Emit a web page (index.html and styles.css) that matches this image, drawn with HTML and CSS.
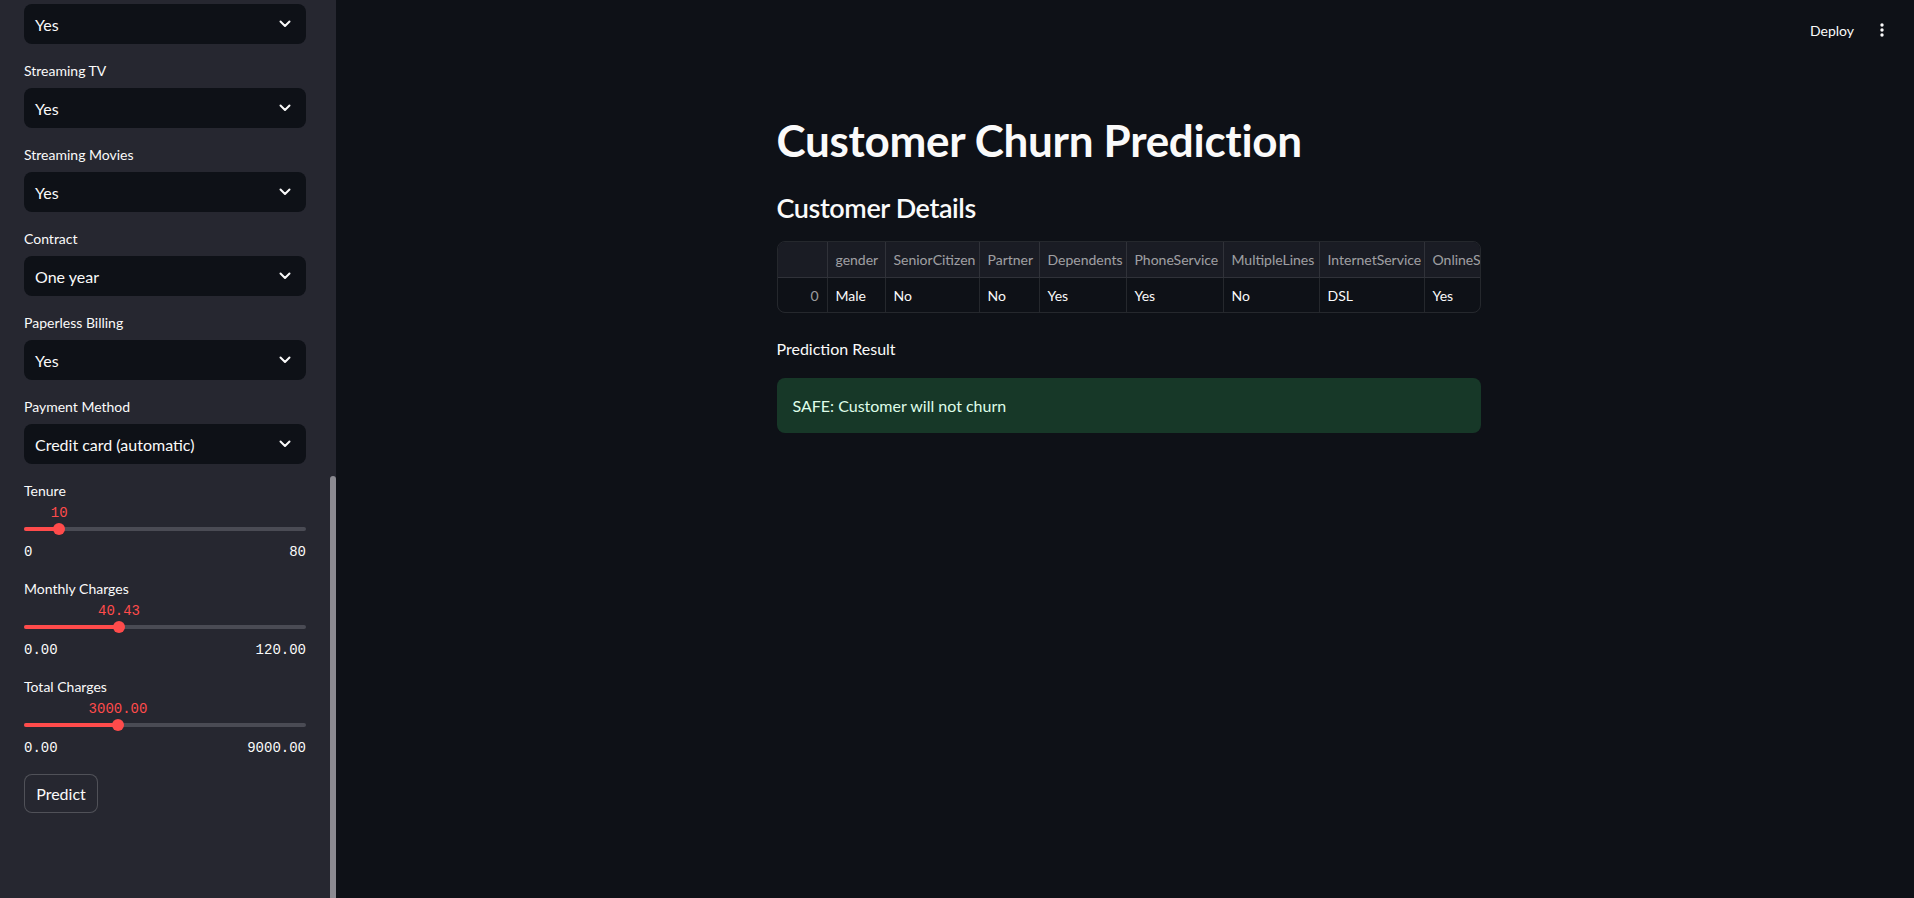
FILE: index.html
```html
<!DOCTYPE html>
<html lang="en">
<head>
<meta charset="utf-8">
<title>Customer Churn Prediction</title>
<link rel="stylesheet" href="styles.css">
</head>
<body>
<div class="app">
  <aside class="sidebar">
    <div class="side-content">
      <div class="select"><span>Yes</span><svg class="chev" viewBox="0 0 12 8" width="12" height="8"><path d="M1.5 1.5 L6 6 L10.5 1.5" fill="none" stroke="#fafafa" stroke-width="2" stroke-linecap="round" stroke-linejoin="round"/></svg></div>

      <div class="field">
        <div class="label">Streaming TV</div>
        <div class="select"><span>Yes</span><svg class="chev" viewBox="0 0 12 8" width="12" height="8"><path d="M1.5 1.5 L6 6 L10.5 1.5" fill="none" stroke="#fafafa" stroke-width="2" stroke-linecap="round" stroke-linejoin="round"/></svg></div>
      </div>

      <div class="field">
        <div class="label">Streaming Movies</div>
        <div class="select"><span>Yes</span><svg class="chev" viewBox="0 0 12 8" width="12" height="8"><path d="M1.5 1.5 L6 6 L10.5 1.5" fill="none" stroke="#fafafa" stroke-width="2" stroke-linecap="round" stroke-linejoin="round"/></svg></div>
      </div>

      <div class="field">
        <div class="label">Contract</div>
        <div class="select"><span>One year</span><svg class="chev" viewBox="0 0 12 8" width="12" height="8"><path d="M1.5 1.5 L6 6 L10.5 1.5" fill="none" stroke="#fafafa" stroke-width="2" stroke-linecap="round" stroke-linejoin="round"/></svg></div>
      </div>

      <div class="field">
        <div class="label">Paperless Billing</div>
        <div class="select"><span>Yes</span><svg class="chev" viewBox="0 0 12 8" width="12" height="8"><path d="M1.5 1.5 L6 6 L10.5 1.5" fill="none" stroke="#fafafa" stroke-width="2" stroke-linecap="round" stroke-linejoin="round"/></svg></div>
      </div>

      <div class="field">
        <div class="label">Payment Method</div>
        <div class="select"><span>Credit card (automatic)</span><svg class="chev" viewBox="0 0 12 8" width="12" height="8"><path d="M1.5 1.5 L6 6 L10.5 1.5" fill="none" stroke="#fafafa" stroke-width="2" stroke-linecap="round" stroke-linejoin="round"/></svg></div>
      </div>

      <div class="field">
        <div class="label">Tenure</div>
        <div class="slider">
          <div class="track">
            <div class="fill" style="width:12.5%"></div>
            <div class="thumb" style="left:12.5%"></div>
            <div class="thumb-value" style="left:12.5%">10</div>
          </div>
          <div class="ticks"><span>0</span><span>80</span></div>
        </div>
      </div>

      <div class="field">
        <div class="label">Monthly Charges</div>
        <div class="slider">
          <div class="track">
            <div class="fill" style="width:33.69%"></div>
            <div class="thumb" style="left:33.69%"></div>
            <div class="thumb-value" style="left:33.69%">40.43</div>
          </div>
          <div class="ticks"><span>0.00</span><span>120.00</span></div>
        </div>
      </div>

      <div class="field">
        <div class="label">Total Charges</div>
        <div class="slider">
          <div class="track">
            <div class="fill" style="width:33.33%"></div>
            <div class="thumb" style="left:33.33%"></div>
            <div class="thumb-value" style="left:33.33%">3000.00</div>
          </div>
          <div class="ticks"><span>0.00</span><span>9000.00</span></div>
        </div>
      </div>

      <div class="field">
        <button class="btn">Predict</button>
      </div>
    </div>
    <div class="scrollbar"></div>
  </aside>

  <main class="main">
    <header class="topbar">
      <span class="deploy">Deploy</span>
      <svg class="kebab" viewBox="0 0 16 16" width="16" height="16"><circle cx="8" cy="3" r="1.7" fill="#fafafa"/><circle cx="8" cy="8" r="1.7" fill="#fafafa"/><circle cx="8" cy="13" r="1.7" fill="#fafafa"/></svg>
    </header>
    <div class="block">
      <h1 class="title">Customer Churn Prediction</h1>
      <h3 class="subheader">Customer Details</h3>
      <div class="table">
        <div class="row head">
          <div class="cell idx"></div>
          <div class="cell">gender</div>
          <div class="cell">SeniorCitizen</div>
          <div class="cell">Partner</div>
          <div class="cell">Dependents</div>
          <div class="cell">PhoneService</div>
          <div class="cell">MultipleLines</div>
          <div class="cell">InternetService</div>
          <div class="cell">OnlineSecurity</div>
        </div>
        <div class="row">
          <div class="cell idx">0</div>
          <div class="cell">Male</div>
          <div class="cell">No</div>
          <div class="cell">No</div>
          <div class="cell">Yes</div>
          <div class="cell">Yes</div>
          <div class="cell">No</div>
          <div class="cell">DSL</div>
          <div class="cell">Yes</div>
        </div>
      </div>
      <p class="result-label">Prediction Result</p>
      <div class="success">SAFE: Customer will not churn</div>
    </div>
  </main>
</div>
</body>
</html>
```

FILE: styles.css
```css
* { box-sizing: border-box; }
html, body {
  margin: 0;
  padding: 0;
  background: #0e1117;
  color: #fafafa;
  font-family: Lato, "Noto Sans", sans-serif;
}
.app {
  display: flex;
  height: 898px;
  overflow: hidden;
}
.sidebar {
  width: 336px;
  flex: none;
  background: #262730;
  position: relative;
  overflow: hidden;
}
.side-content {
  padding: 4px 30px 0 24px;
  display: flex;
  flex-direction: column;
  gap: 16px;
}
.label {
  font-size: 14px;
  line-height: 22px;
  height: 24px;
  margin-bottom: 4px;
  color: #fafafa;
}
.select {
  height: 40px;
  background: #0e1117;
  border-radius: 8px;
  display: flex;
  align-items: center;
  justify-content: space-between;
  padding: 0 15px 0 11px;
  font-size: 16px;
  color: #fafafa;
}
.chev { display: block; }
.slider {
  padding-top: 19px;
}
.track {
  position: relative;
  height: 4px;
  border-radius: 2px;
  background: #4a4b54;
}
.fill {
  height: 4px;
  border-radius: 2px;
  background: #ff4b4b;
}
.thumb {
  position: absolute;
  top: -4px;
  width: 12px;
  height: 12px;
  margin-left: -6px;
  border-radius: 50%;
  background: #ff4b4b;
}
.thumb-value {
  position: absolute;
  top: -22px;
  transform: translateX(-50%);
  font-family: "Liberation Mono", "DejaVu Sans Mono", monospace;
  font-size: 14px;
  line-height: 16px;
  color: #ff4b4b;
  white-space: nowrap;
}
.ticks {
  display: flex;
  justify-content: space-between;
  margin-top: 11px;
  font-family: "Liberation Mono", "DejaVu Sans Mono", monospace;
  font-size: 14px;
  line-height: 20px;
  color: #fafafa;
}
.btn {
  width: 74px;
  height: 39px;
  background: #262730;
  border: 1px solid rgba(250, 250, 250, 0.2);
  border-radius: 8px;
  color: #fafafa;
  font-family: Lato, "Noto Sans", sans-serif;
  font-size: 16px;
  padding: 0;
}
.scrollbar {
  position: absolute;
  right: 0;
  top: 476px;
  bottom: 0;
  width: 6px;
  border-radius: 3px 3px 0 0;
  background: #8b8a91;
}
.main {
  flex: 1;
  padding-left: 7px;
  display: flex;
  flex-direction: column;
  align-items: center;
}
.topbar {
  align-self: stretch;
  height: 60px;
  display: flex;
  align-items: center;
  justify-content: flex-end;
  padding-right: 24px;
  gap: 20px;
}
.deploy {
  font-size: 14px;
  color: #fafafa;
}
.kebab { display: block; }
.block {
  width: 736px;
  padding: 0 16px;
}
.title {
  margin: 54px 0 0;
  font-size: 44px;
  line-height: 53px;
  font-weight: 700;
  letter-spacing: -0.3px;
  color: #fafafa;
}
.subheader {
  margin: 24px 0 0;
  font-size: 27px;
  line-height: 34px;
  font-weight: 600;
  letter-spacing: -0.4px;
  color: #fafafa;
}
.table {
  margin-top: 16px;
  border: 1px solid rgba(250, 250, 250, 0.1);
  border-radius: 8px;
  overflow: hidden;
  font-size: 14px;
}
.row {
  display: grid;
  grid-template-columns: 50px 58px 94px 60px 87px 97px 96px 105px 120px;
  height: 34px;
}
.row.head {
  height: 36px;
  background: #1a1c24;
  color: rgba(250, 250, 250, 0.6);
  border-bottom: 1px solid rgba(250, 250, 250, 0.1);
}
.cell {
  padding: 0 8px;
  display: flex;
  align-items: center;
  white-space: nowrap;
  overflow: hidden;
  border-right: 1px solid rgba(250, 250, 250, 0.1);
}
.cell.idx {
  justify-content: flex-end;
  color: rgba(250, 250, 250, 0.6);
}
.result-label {
  margin: 23px 0 0;
  font-size: 16px;
  line-height: 26px;
}
.success {
  margin-top: 16px;
  height: 55px;
  border-radius: 8px;
  background: #173828;
  color: #dffde9;
  font-size: 16px;
  display: flex;
  align-items: center;
  padding: 0 16px;
}
```
